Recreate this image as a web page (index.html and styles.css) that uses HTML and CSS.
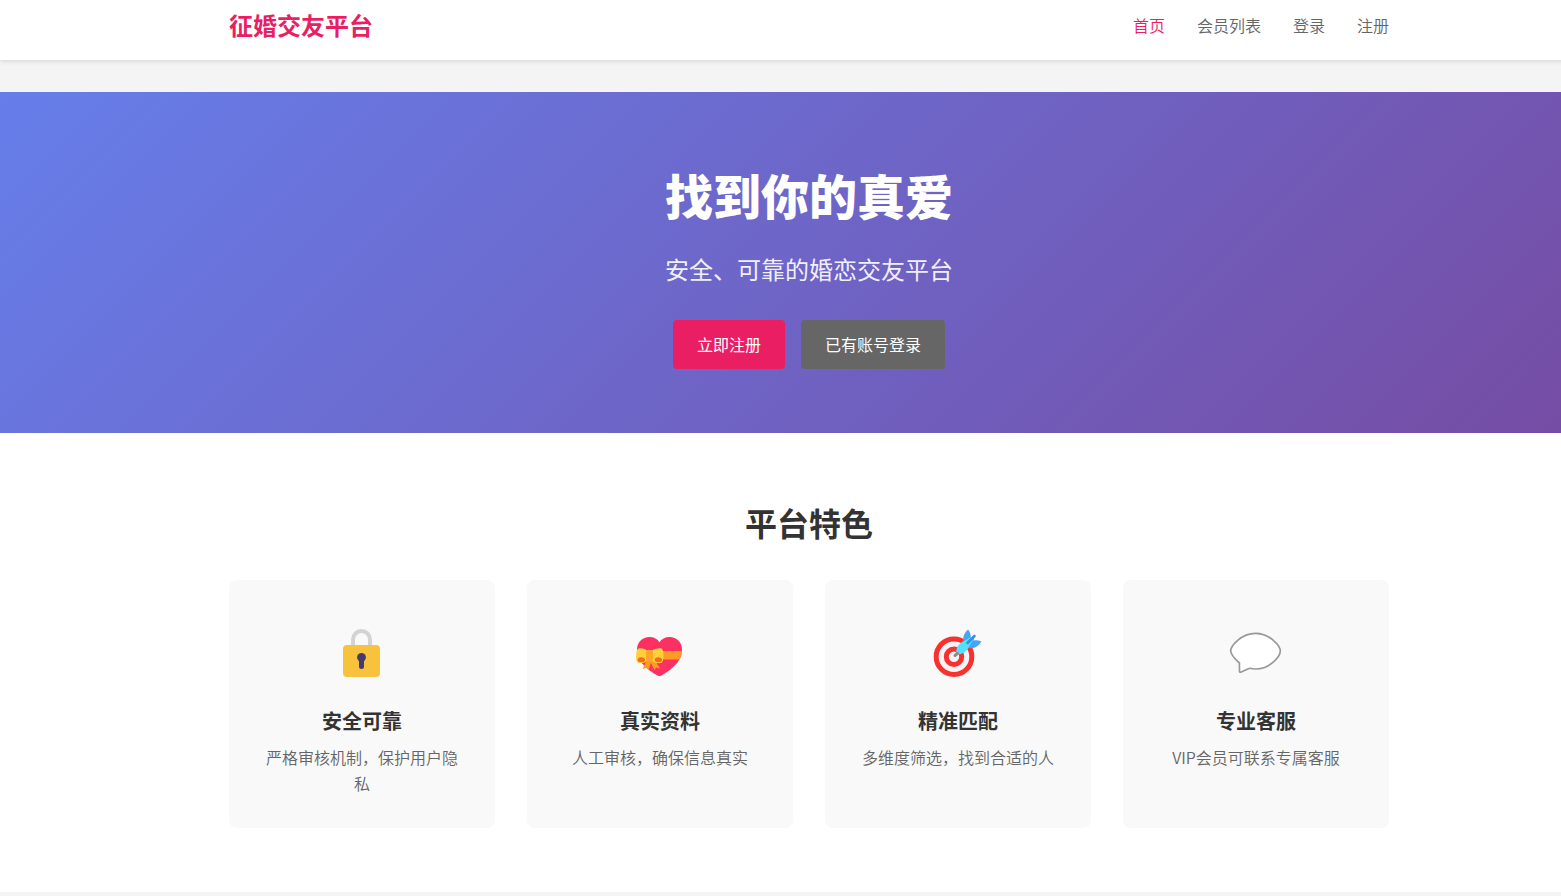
FILE: index.html
```html
<!DOCTYPE html>
<html lang="zh-CN">
<head>
    <meta charset="UTF-8">
    <meta name="viewport" content="width=device-width, initial-scale=1.0">
    <title>征婚交友平台</title>
    <link rel="stylesheet" href="styles.css">
</head>
<body>
    <header class="header">
        <div class="container header-inner">
            <a href="#" class="logo">征婚交友平台</a>
            <nav class="nav">
                <a href="#" class="active">首页</a>
                <a href="#">会员列表</a>
                <a href="#">登录</a>
                <a href="#">注册</a>
            </nav>
        </div>
    </header>

    <main>
        <section class="hero">
            <div class="container">
                <h1>找到你的真爱</h1>
                <p>安全、可靠的婚恋交友平台</p>
                <div class="hero-buttons">
                    <a href="#" class="btn btn-primary">立即注册</a>
                    <a href="#" class="btn btn-secondary">已有账号登录</a>
                </div>
            </div>
        </section>

        <section class="features">
            <div class="container">
                <h2>平台特色</h2>
                <div class="features-grid">
                    <div class="feature-card">
                        <div class="feature-icon">
                            <svg viewBox="0 0 60 60" aria-hidden="true">
                                <path d="M21 27V19.500a8.500 8.500 0 0 1 17 0V27" fill="none" stroke="#d3d3d3" stroke-width="4"/>
                                <rect x="11" y="25" width="37" height="32" rx="4" fill="#f9c23c"/>
                                <circle cx="29.500" cy="37.300" r="4.400" fill="#433b6b"/>
                                <path d="M29.500 38v8.500" stroke="#433b6b" stroke-width="5" stroke-linecap="round"/>
                            </svg>
                        </div>
                        <h3>安全可靠</h3>
                        <p>严格审核机制，保护用户隐私</p>
                    </div>
                    <div class="feature-card">
                        <div class="feature-icon">
                            <svg viewBox="0 0 60 60" aria-hidden="true">
                                <path d="M29.500 22.300C31.500 19 35 17 39.500 17C46.500 17 52 22 52 29.500C52 42 40.500 50.500 31.500 55.400Q29.500 56.500 27.500 55.400C18.500 50.500 7 42 7 29.500C7 22 12.500 17 19.500 17C24 17 27.500 19 29.500 22.300Z" fill="#fb3163"/>
                                <path d="M30 31H52Q51.700 35.500 49.800 39.500H30Z" fill="#ff9b22"/>
                                <path d="M17 40L12.500 49L16.500 47.800L18.500 50.500L21.500 41Z" fill="#ff9b22"/>
                                <path d="M19.500 40L24.500 50.200L26 47.500L30 48.500L24 39Z" fill="#ff9b22"/>
                                <path d="M17 30.500C14.500 28.500 11 28 8.500 28.500Q6 30 6 36Q6 41 8 43C12 43.500 16 43 17.500 40Z" fill="#ffd038"/>
                                <path d="M22 30.500C25 28.500 29 28 31.500 28.500Q33.500 30 33.500 36Q33.500 41 31.500 43C28 43.500 23.500 43 21.500 40Z" fill="#ffd038"/>
                                <ellipse cx="11.300" cy="39.800" rx="3.700" ry="2.500" fill="#f66a1f"/>
                                <ellipse cx="28.400" cy="39.800" rx="3.700" ry="2.500" fill="#f66a1f"/>
                                <rect x="16" y="30" width="7" height="11" rx="2" fill="#ffa52a"/>
                            </svg>
                        </div>
                        <h3>真实资料</h3>
                        <p>人工审核，确保信息真实</p>
                    </div>
                    <div class="feature-card">
                        <div class="feature-icon">
                            <svg viewBox="0 0 60 60" aria-hidden="true">
                                <circle cx="26" cy="36.700" r="17.800" fill="#f5f3f6" stroke="#f8312f" stroke-width="5"/>
                                <circle cx="26" cy="36.700" r="7.700" fill="#f5f3f6" stroke="#f8312f" stroke-width="5"/>
                                <path d="M35.500 21.500C34.500 16 37 12.500 40 9.500Q42.500 12 43 18.500L47 15L45.500 20.500Q49.500 19.500 53.300 21.500C51 26 46.500 29 41 28Z" fill="#46a4fb"/>
                                <path d="M28.500 30C29 25.500 33 22 37 20.500L42.800 17L45 20L41.500 26C39.500 30.500 36 33.500 31 34.300Q27.500 34 28.500 30Z" fill="#50e2ff"/>
                                <path d="M39.500 23L46.500 16" stroke="#328fe5" stroke-width="2.500" stroke-linecap="round"/>
                                <path d="M27 35.500L29.500 33.300" stroke="#8c8c8c" stroke-width="3" stroke-linecap="round"/>
                            </svg>
                        </div>
                        <h3>精准匹配</h3>
                        <p>多维度筛选，找到合适的人</p>
                    </div>
                    <div class="feature-card">
                        <div class="feature-icon">
                            <svg viewBox="0 0 60 60" aria-hidden="true">
                                <path d="M13.400 43C9 39 4.700 34.500 4.700 31C4.700 26 15 13.300 29.500 13.300C44 13.300 54.300 26 54.300 31C54.300 36.500 43.500 49 30 49Q26.500 49 23.700 48.300C19.500 49.600 17.500 51.500 14.800 52.200Q13.500 52.500 13.500 51Z" fill="#fff" stroke="#999" stroke-width="1.700" stroke-linejoin="round"/>
                            </svg>
                        </div>
                        <h3>专业客服</h3>
                        <p>VIP会员可联系专属客服</p>
                    </div>
                </div>
            </div>
        </section>
    </main>
</body>
</html>
```
FILE: styles.css
```css
* {
    margin: 0;
    padding: 0;
    box-sizing: border-box;
}

html {
    overflow-x: hidden;
    background-color: #f4f4f4;
}

body {
    width: calc(100% + 57px);
    font-family: 'Noto Sans CJK SC', sans-serif;
    font-size: 16px;
    line-height: 26px;
    color: #333;
    background-color: #f4f4f4;
}

a {
    text-decoration: none;
}

.container {
    max-width: 1200px;
    margin: 0 auto;
    padding: 0 20px;
}

.header {
    padding: 6px 0 16px;
    background: #fff;
    box-shadow: 0 2px 4px rgba(0, 0, 0, 0.1);
}

.header-inner {
    display: flex;
    justify-content: space-between;
    align-items: center;
}

.logo {
    font-size: 24px;
    line-height: 38px;
    font-weight: bold;
    color: #e91e63;
}

.nav {
    display: flex;
    gap: 32px;
}

.nav a {
    color: #666;
    font-weight: 350;
}

.nav a:hover,
.nav a.active {
    color: #e91e63;
}

.hero {
    margin-top: 32px;
    padding: 64px 0;
    background: linear-gradient(135deg, #667eea 0%, #764ba2 100%);
    color: #fff;
    text-align: center;
}

.hero h1 {
    margin-bottom: 16px;
    font-size: 48px;
    font-weight: 900;
    line-height: 77px;
}

.hero p {
    margin-bottom: 32px;
    font-size: 24px;
    line-height: 39px;
    opacity: 0.9;
}

.hero-buttons {
    display: flex;
    justify-content: center;
    gap: 16px;
}

.btn {
    padding: 12px 24px;
    border-radius: 4px;
    line-height: 25px;
    color: #fff;
}

.btn-primary {
    background: #e91e63;
}

.btn-secondary {
    background: #666;
}

.features {
    padding: 64px 0;
    background: #fff;
}

.features h2 {
    margin-bottom: 32px;
    font-size: 32px;
    line-height: 51px;
    text-align: center;
}

.features-grid {
    display: grid;
    grid-template-columns: repeat(auto-fit, minmax(250px, 1fr));
    gap: 32px;
}

.feature-card {
    padding: 32px;
    border-radius: 8px;
    background: #f9f9f9;
    text-align: center;
}

.feature-icon {
    display: flex;
    justify-content: center;
    align-items: center;
    height: 76px;
    margin-bottom: 16px;
}

.feature-icon svg {
    width: 60px;
    height: 60px;
}

.feature-card h3 {
    margin-bottom: 6px;
    font-size: 20px;
    line-height: 34px;
}

.feature-card p {
    color: #666;
    font-weight: 350;
}
```
